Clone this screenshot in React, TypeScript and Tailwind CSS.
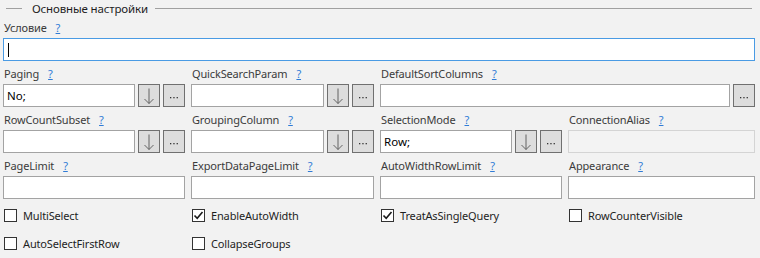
import React from 'react';

const font = { fontFamily: '"Noto Sans", "Open Sans", Arial, sans-serif' };

// кнопка со стрелкой вниз
const ArrowButton: React.FC = () => (
  <div className="w-[22px] h-[23px] shrink-0 border border-[#707070] bg-[#dddddd] flex justify-center">
    <svg width="12" height="23" viewBox="0 0 12 23" className="-mt-px">
      <path d="M6 4.5 V19.5 M1.5 15 L6 19.5 L10.5 15" fill="none" stroke="#555555" strokeWidth="0.9" />
    </svg>
  </div>
);

// кнопка с многоточием
const DotsButton: React.FC = () => (
  <div className="w-[22px] h-[23px] shrink-0 border border-[#707070] bg-[#dddddd] flex justify-center">
    <svg width="10" height="23" viewBox="0 0 10 23" className="-mt-px">
      <rect x="1" y="13" width="1.3" height="1.3" fill="#333" />
      <rect x="4.3" y="13" width="1.3" height="1.3" fill="#333" />
      <rect x="7.6" y="13" width="1.3" height="1.3" fill="#333" />
    </svg>
  </div>
);

const Label: React.FC<{ text: string }> = ({ text }) => (
  <div className="h-[23px] pt-[5px] pl-[1px] text-[11px] tracking-[-0.15px] leading-[16px] text-[#3b3b3b] whitespace-nowrap">
    {text}
    <span className="ml-[9px] text-[#2f7bd6] underline">?</span>
  </div>
);

const Input: React.FC<{ value?: string; disabled?: boolean; caret?: boolean; focused?: boolean }> = ({
  value,
  disabled,
  caret,
  focused,
}) => (
  <div
    className={
      'h-[23px] flex-1 min-w-0 border flex items-center px-[3px] text-[11.5px] text-black ' +
      (focused
        ? 'border-[#4a9be4] bg-white'
        : disabled
        ? 'border-[#d4d4d4] bg-[#f3f3f3]'
        : 'border-[#a3a3a3] bg-white')
    }
  >
    {caret && <span className="w-px h-[14px] bg-black ml-[1px]" />}
    {value}
  </div>
);

type FieldProps = {
  label: string;
  value?: string;
  arrow?: boolean;
  dots?: boolean;
  disabled?: boolean;
  className?: string;
};

const Field: React.FC<FieldProps> = ({ label, value, arrow, dots, disabled, className }) => (
  <div className={className}>
    <Label text={label} />
    <div className="flex gap-[3px]">
      <Input value={value} disabled={disabled} />
      {arrow && <ArrowButton />}
      {dots && <DotsButton />}
    </div>
  </div>
);

const Check: React.FC<{ label: string; checked?: boolean }> = ({ label, checked }) => (
  <div className="flex items-center h-[13px] pl-[1px]">
    <div className="w-[13px] h-[13px] border border-[#333] bg-white flex items-center justify-center">
      {checked && (
        <svg width="11" height="11" viewBox="0 0 11 11">
          <path d="M1.5 5.5 L4.2 8.3 L9.5 2" fill="none" stroke="#1a1a1a" strokeWidth="1.6" />
        </svg>
      )}
    </div>
    <span className="ml-[6px] text-[11px] tracking-[-0.15px] leading-[16px] text-[#1e1e1e]">{label}</span>
  </div>
);

const App: React.FC = () => {
  return (
    <div className="w-[760px] h-[258px] bg-[#f2f2f2] overflow-hidden" style={font}>
      {/* заголовок группы */}
      <div className="h-[15px] flex">
        <div className="mt-[8px] ml-[6px] w-[16px] h-px bg-[#a0a0a0]" />
        <div className="ml-[10px] pt-[1px] text-[11.5px] tracking-[-0.15px] leading-[16px] text-[#1e1e1e] whitespace-nowrap">
          Основные настройки
        </div>
        <div className="mt-[8px] ml-[7px] mr-[8px] flex-1 h-px bg-[#a0a0a0]" />
      </div>

      <div className="pl-[3px] pr-[5px]">
        {/* Условие */}
        <Label text="Условие" />
        <div className="flex">
          <Input focused caret />
        </div>

        <div className="grid grid-cols-[182px_183px_182px_1fr] gap-x-[6px]">
          <Field label="Paging" value="No;" arrow dots />
          <Field label="QuickSearchParam" arrow dots />
          <Field label="DefaultSortColumns" dots className="col-span-2" />

          <Field label="RowCountSubset" arrow dots />
          <Field label="GroupingColumn" arrow dots />
          <Field label="SelectionMode" value="Row;" arrow dots />
          <Field label="ConnectionAlias" disabled />

          <Field label="PageLimit" />
          <Field label="ExportDataPageLimit" />
          <Field label="AutoWidthRowLimit" />
          <Field label="Appearance" />
        </div>

        <div className="grid grid-cols-[182px_183px_182px_1fr] gap-x-[6px] gap-y-[15px] mt-[10px]">
          <Check label="MultiSelect" />
          <Check label="EnableAutoWidth" checked />
          <Check label="TreatAsSingleQuery" checked />
          <Check label="RowCounterVisible" />
          <Check label="AutoSelectFirstRow" />
          <Check label="CollapseGroups" />
        </div>
      </div>
    </div>
  );
};

export default App;
